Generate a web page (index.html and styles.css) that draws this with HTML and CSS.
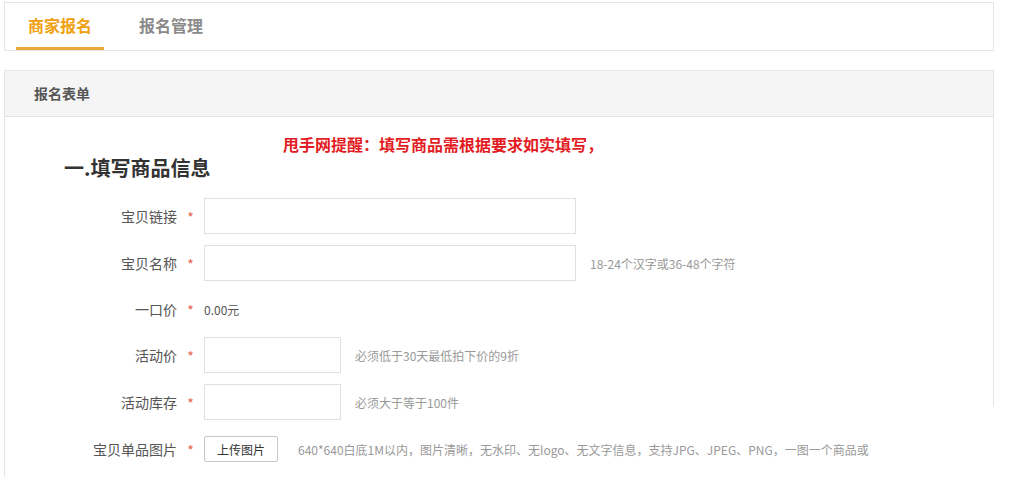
FILE: index.html
```html
<!DOCTYPE html>
<html lang="zh-CN">
<head>
    <meta charset="UTF-8">
    <title>商家报名</title>
    <link rel="stylesheet" href="styles.css">
</head>
<body>
    <!-- Tabs -->
    <div class="tabBar">
        <a class="tab active">商家报名</a>
        <a class="tab">报名管理</a>
    </div>

    <!-- Form panel -->
    <div class="panel">
        <div class="panelHead">报名表单</div>
        <div class="panelBody">
            <div class="notice">甩手网提醒：填写商品需根据要求如实填写，</div>
            <h2 class="sectionTitle">一.填写商品信息</h2>

            <div class="formRow">
                <label class="rowLabel">宝贝链接</label>
                <span class="star">*</span>
                <input type="text" class="textInput wide">
            </div>

            <div class="formRow">
                <label class="rowLabel">宝贝名称</label>
                <span class="star">*</span>
                <input type="text" class="textInput wide">
                <span class="hint">18-24个汉字或36-48个字符</span>
            </div>

            <div class="formRow textRow">
                <label class="rowLabel">一口价</label>
                <span class="star">*</span>
                <span class="price">0.00元</span>
            </div>

            <div class="formRow">
                <label class="rowLabel">活动价</label>
                <span class="star">*</span>
                <input type="text" class="textInput short">
                <span class="hint">必须低于30天最低拍下价的9折</span>
            </div>

            <div class="formRow">
                <label class="rowLabel">活动库存</label>
                <span class="star">*</span>
                <input type="text" class="textInput short">
                <span class="hint">必须大于等于100件</span>
            </div>

            <div class="formRow uploadRow">
                <label class="rowLabel">宝贝单品图片</label>
                <span class="star">*</span>
                <button class="uploadBtn">上传图片</button>
                <span class="hint longHint">640*640白底1M以内，图片清晰，无水印、无logo、无文字信息，支持JPG、JPEG、PNG，一图一个商品或</span>
            </div>
        </div>
    </div>
</body>
</html>
```

FILE: styles.css
```css
body {
    margin: 0;
    padding: 2px 16px 0 4px;
    font-family: "Noto Sans CJK SC", "Liberation Sans", sans-serif;
    background: #fff;
    color: #555;
}

.tabBar {
    display: flex;
    height: 47px;
    border: 1px solid #e5e5e5;
    padding-left: 11px;
    gap: 23px;
}

.tab {
    display: flex;
    align-items: center;
    padding: 0 12px 1px;
    font-size: 16px;
    font-weight: bold;
    color: #8a8a8a;
    border-bottom: 3px solid transparent;
    cursor: pointer;
}

.tab.active {
    color: #f0a010;
    border-bottom-color: #e8a93a;
}

.panel {
    position: relative;
    margin-top: 19px;
    border: 1px solid #e5e5e5;
    border-right: none;
    border-bottom: none;
    height: 406px;
}

/* the right edge of the panel stops short of the bottom, as in the original */
.panel::after {
    content: "";
    position: absolute;
    top: -1px;
    right: 0;
    height: 337px;
    border-right: 1px solid #e5e5e5;
}

.panelHead {
    height: 45px;
    line-height: 45px;
    background: #f5f5f5;
    border-bottom: 1px solid #e2e2e2;
    padding-left: 29px;
    font-size: 14px;
    font-weight: bold;
    color: #555;
}

.panelBody {
    position: relative;
    padding: 37px 0 0 0;
}

.notice {
    position: absolute;
    left: 278px;
    top: 15px;
    font-size: 16px;
    font-weight: bold;
    color: #e31b23;
}

.sectionTitle {
    margin: 0 0 16px 59px;
    font-size: 20px;
    line-height: 28px;
    color: #333;
}

.formRow {
    display: flex;
    align-items: center;
    height: 36px;
    margin-bottom: 11px;
}

.formRow.textRow {
    height: 34px;
}

.rowLabel {
    width: 172px;
    text-align: right;
    font-size: 14px;
    color: #555;
}

.star {
    width: 27px;
    text-align: center;
    color: #e8644c;
    font-size: 14px;
    padding-top: 2px;
}

.textInput {
    box-sizing: border-box;
    height: 36px;
    border: 1px solid #e0e0e0;
    outline: none;
    padding: 0 8px;
}

.textInput.wide {
    width: 372px;
}

.textInput.short {
    width: 137px;
}

.hint {
    margin-left: 14px;
    font-size: 12px;
    color: #999;
}

.price {
    font-size: 12px;
    color: #555;
}

.uploadRow {
    margin-top: 0;
}

.uploadBtn {
    box-sizing: border-box;
    width: 74px;
    height: 26px;
    border: 1px solid #c8c8c8;
    border-radius: 2px;
    background: #fff;
    font-family: inherit;
    font-size: 12px;
    color: #333;
    cursor: pointer;
}

.longHint {
    margin-left: 20px;
}
```
